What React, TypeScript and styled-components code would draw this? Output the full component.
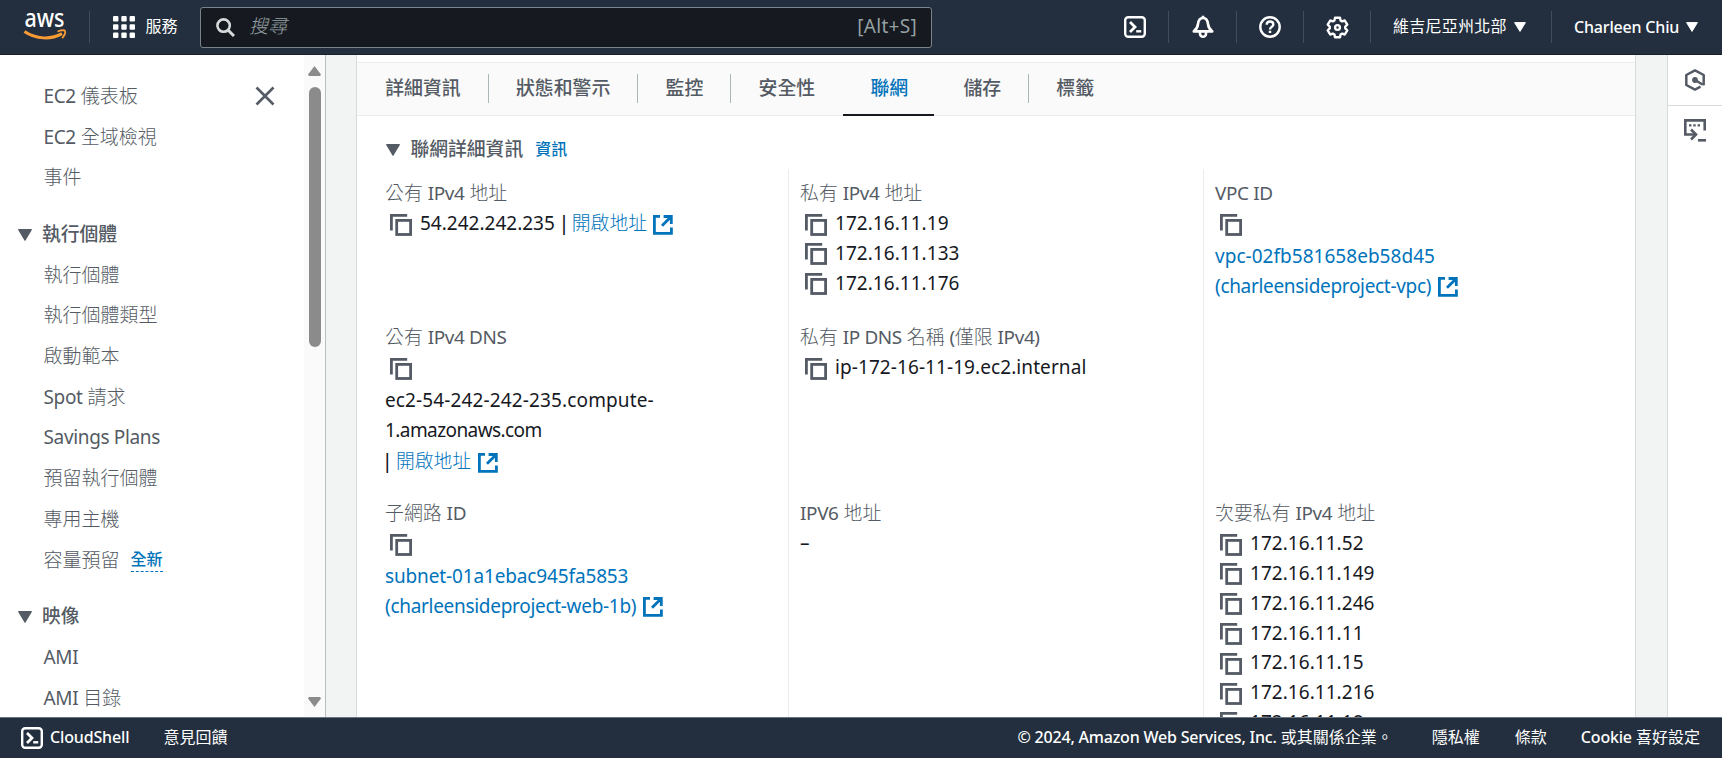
import React from "react";
import styled, { createGlobalStyle } from "styled-components";

const Global = createGlobalStyle`
  *, *::before, *::after { box-sizing: border-box; }
  html, body { margin: 0; height: 100%; overflow: hidden; }
  body {
    font-family: "Noto Sans", "Noto Sans CJK TC", sans-serif;
    font-size: 19px;
    line-height: 29.8px;
    color: #16191f;
    background: #f2f3f3;
  }
`;

const Page = styled.div`
  display: flex;
  flex-direction: column;
  width: 1722px;
  height: 758px;
  overflow: hidden;
`;

/* ---------- top bar ---------- */

const TopBar = styled.header`
  display: flex;
  align-items: center;
  flex: none;
  height: 55px;
  background: #232f3e;
  border-bottom: 1px solid #17202b;
  color: #fff;
  font-size: 16px;
`;

const Logo = styled.svg`
  display: block;
  flex: none;
  width: 44px;
  height: 34px;
  margin: 0 22px 2px 23px;
  overflow: visible;
`;

const BarDivider = styled.span`
  flex: none;
  width: 1px;
  height: 32px;
  background: #414d5c;
`;

const Services = styled.div`
  display: flex;
  align-items: center;
  width: 110px;
  padding-left: 23px;
  gap: 10.5px;
  line-height: 20px;
  white-space: nowrap;
`;

const RaisedLabel = styled.span`
  padding-bottom: 2px;
`;

const SearchBox = styled.div`
  display: flex;
  align-items: center;
  flex: none;
  width: 732px;
  height: 41px;
  padding: 0 14px 0 15px;
  border: 1px solid #7a848c;
  border-radius: 3px;
  background: #16191f;
  color: #95a0a3;
  font-size: 19px;
`;

const Placeholder = styled.span`
  flex: 1;
  margin-left: 14px;
  font-style: italic;
  font-weight: 300;
  color: #95a0a3;
`;

const Shortcut = styled.span`
  letter-spacing: 0.3px;
`;

const BarActions = styled.nav`
  display: flex;
  align-items: center;
  margin-left: auto;
`;

const BarIcon = styled.span<{ $w: number }>`
  display: flex;
  justify-content: center;
  width: ${(p) => p.$w}px;
`;

const BarMenu = styled.span<{ $w: number; $ls?: number }>`
  display: flex;
  align-items: center;
  justify-content: flex-start;
  gap: 7px;
  width: ${(p) => p.$w}px;
  padding-left: 22px;
  letter-spacing: ${(p) => p.$ls ?? 0}px;
  line-height: 20px;
  white-space: nowrap;
`;

const Medium = styled.span<{ $ls?: number }>`
  font-weight: 500;
  letter-spacing: ${(p) => p.$ls ?? -0.1}px;
`;

/* ---------- body ---------- */

const Body = styled.div`
  display: flex;
  flex: 1;
  min-height: 0;
`;

const Sidebar = styled.aside`
  display: flex;
  flex: none;
  width: 326px;
  background: #fff;
  border-right: 1px solid #b9bec1;
`;

const NavList = styled.div`
  flex: 1;
  padding-top: 21.5px;
  color: #545b64;
  overflow: hidden;
`;

const NavItem = styled.div`
  display: flex;
  align-items: center;
  height: 40.7px;
  padding-left: 43.5px;
  font-weight: 300;
  white-space: nowrap;
`;

const Latin = styled.span`
  font-weight: 400;
  letter-spacing: -0.35px;
`;

const CloseButton = styled.span`
  display: flex;
  margin: 0 29px 1px auto;
`;

const NavHeading = styled.div`
  display: flex;
  align-items: center;
  gap: 10.5px;
  height: 40.7px;
  margin-top: 16px;
  padding-left: 17.5px;
  font-size: 18.8px;
  font-weight: 500;
`;

const NewBadge = styled.span`
  margin-left: 11px;
  border-bottom: 1.4px dashed #0073bb;
  color: #0073bb;
  font-size: 16px;
  font-weight: 500;
  line-height: 23px;
`;

const ScrollTrack = styled.div`
  display: flex;
  flex-direction: column;
  align-items: center;
  width: 21px;
  padding: 11px 0 10px;
  background: #fafafa;
`;

const ScrollThumb = styled.div`
  width: 12px;
  height: 260px;
  margin: 11px 0 auto;
  border-radius: 6px;
  background: #8b8b8b;
`;

const Main = styled.main`
  flex: 1;
  display: flex;
  padding: 0 31px 0 30px;
  background: #f2f3f3;
`;

const Panel = styled.section`
  flex: 1;
  min-width: 0;
  display: flex;
  flex-direction: column;
  background: #fff;
  border: 1px solid #d5dbdb;
  border-width: 0 1px;
`;

const Tabs = styled.div`
  display: flex;
  flex: none;
  height: 54px;
  margin-top: 7px;
  background: #fafafa;
  border-top: 1px solid #eaeded;
  border-bottom: 1px solid #eaeded;
  color: #545b64;
`;

const Tab = styled.div<{ $active?: boolean }>`
  position: relative;
  display: flex;
  align-items: center;
  padding: 0 27px 1px 28.2px;
  font-size: 18.9px;
  font-weight: 500;
  color: ${(p) => (p.$active ? "#0073bb" : "inherit")};
  white-space: nowrap;

  & + &::before {
    content: "";
    position: absolute;
    left: 0;
    top: 11px;
    width: 1px;
    height: 29px;
    background: #aab7b8;
  }

  &::after {
    content: "";
    display: ${(p) => (p.$active ? "block" : "none")};
    position: absolute;
    left: 1px;
    right: 1px;
    bottom: -1px;
    height: 2.4px;
    background: #16191f;
  }
`;

const SectionHead = styled.div`
  display: flex;
  align-items: center;
  flex: none;
  height: 53px;
  padding: 15px 0 0 29px;
  color: #545b64;
  font-size: 18.8px;
  font-weight: 500;
`;

const SectionTitle = styled.span`
  margin: 0 12px 0 10.5px;
`;

const InfoLink = styled.span`
  color: #0073bb;
  font-size: 16px;
  font-weight: 500;
`;

const Columns = styled.div`
  display: grid;
  grid-template-columns: 431px 415px 1fr;
  flex: 1;
  min-height: 0;
  overflow: hidden;
`;

const Column = styled.div<{ $first?: boolean }>`
  padding: 10px 0 0 ${(p) => (p.$first ? 28 : 11)}px;
  border-left: ${(p) => (p.$first ? "none" : "1px solid #eaeded")};
`;

const Field = styled.div<{ $h: number }>`
  height: ${(p) => p.$h}px;
`;

const Label = styled.div`
  color: #545b64;
  font-size: 18.9px;
  font-weight: 300;
  height: 30.3px;
  white-space: nowrap;
`;

const Line = styled.div<{ $mt?: number; $link?: boolean; $ls?: number }>`
  display: flex;
  align-items: center;
  height: 29.8px;
  margin-top: ${(p) => p.$mt ?? 0}px;
  color: ${(p) => (p.$link ? "#0073bb" : "inherit")};
  letter-spacing: ${(p) => p.$ls ?? 0}px;
  white-space: nowrap;
`;

const CopyOnly = styled.div`
  height: 32.5px;
  display: flex;
  padding-top: 4px;
`;

const Pipe = styled.span`
  width: 5px;
  margin: 0 5px 0 7px;
  text-indent: -3px;
  font-weight: 500;
`;

const LeadingPipe = styled(Pipe)`
  margin: 0 6px 0 0;
  text-indent: -3px;
`;

const Link = styled.span`
  color: #0073bb;
  font-weight: 300;
  font-size: 18.8px;
`;

const CopySvg = styled.svg`
  flex: none;
  display: block;
  width: 22px;
  height: 22px;
  margin: 1px 8px 0 5px;
`;

const ExternalSvg = styled.svg`
  flex: none;
  display: block;
  width: 20px;
  height: 20px;
  margin: 1px 0 0 6.5px;
`;

const Rail = styled.aside`
  flex: none;
  width: 55px;
  background: #fff;
  border-left: 1px solid #d5dbdb;
`;

const RailItem = styled.div<{ $line?: boolean }>`
  display: flex;
  justify-content: center;
  align-items: center;
  height: ${(p) => (p.$line ? 51 : 48)}px;
  border-bottom: ${(p) => (p.$line ? "1px solid #d5dbdb" : "none")};
`;

/* ---------- footer ---------- */

const Footer = styled.footer`
  display: flex;
  align-items: center;
  flex: none;
  height: 41px;
  padding: 0 22px 1px 21px;
  background: #232f3e;
  border-top: 1px solid #6b7581;
  color: #fff;
  font-size: 16px;
  white-space: nowrap;
`;

const FooterText = styled.span<{ $ml?: number; $push?: boolean }>`
  margin-left: ${(p) => (p.$push ? "auto" : `${p.$ml ?? 0}px`)};
`;

/* ---------- icons ---------- */

const Copy = () => (
  <CopySvg viewBox="0 0 22 22" fill="none" stroke="#545b64" strokeWidth="2.8">
    <path d="M1.4 16.4V1.4H17.2" />
    <rect x="6.7" y="6.4" width="13.9" height="14.1" />
  </CopySvg>
);

const External = () => (
  <ExternalSvg viewBox="0 0 20 20" fill="none" stroke="#0073bb" strokeWidth="2.8">
    <path d="M7 1.4H1.4V18.4H18.4V12.6" />
    <path d="M10.6 1.5h7.7V9M18 1.8L9 10.8" />
  </ExternalSvg>
);

const Caret = ({ w, h, fill }: { w: number; h: number; fill: string }) => (
  <svg width={w} height={h} viewBox="0 0 12 10" preserveAspectRatio="none" fill={fill} stroke={fill} strokeLinejoin="round">
    <path d="M.6 .6h10.8L6 9.4z" />
  </svg>
);

const Shell = () => (
  <svg width="22" height="22" viewBox="0 0 22 22" fill="none" stroke="#fff" strokeWidth="2.4">
    <rect x="1.2" y="1.2" width="19.6" height="19.6" rx="3" />
    <path d="M6 6l5 5-5 5" strokeWidth="2.8" />
    <path d="M12.2 15.3h5" strokeWidth="2.4" />
  </svg>
);

const copyLines = (list: string[]) =>
  list.map((ip) => (
    <Line key={ip} $ls={0.04}>
      <Copy />
      {ip}
    </Line>
  ));

const tabs = ["詳細資訊", "狀態和警示", "監控", "安全性", "聯網", "儲存", "標籤"];

export default function App() {
  return (
    <Page>
      <Global />
      <TopBar>
        <Logo viewBox="0 0 44 34">
          <text x="1.5" y="18" fill="#fff" fontSize="25.5" fontWeight="500" textLength="40" lengthAdjust="spacingAndGlyphs">
            aws
          </text>
          <path d="M1.5 22.5C13 30.5 28 30.8 39 24.6" fill="none" stroke="#f79b34" strokeWidth="3" />
          <path d="M34.5 22.6C38 21.2 41.5 21 42 22c.5 1.2-.6 4.6-2.8 7.2" fill="none" stroke="#f79b34" strokeWidth="1.8" />
        </Logo>
        <BarDivider />
        <Services>
          <svg width="22" height="22" viewBox="0 0 22 22" fill="#fff">
            {[0, 8.3, 16.6].map((y) =>
              [0, 8.3, 16.6].map((x) => <rect key={`${x}-${y}`} x={x} y={y} width="5.4" height="5.4" rx="1" />)
            )}
          </svg>
          <RaisedLabel>服務</RaisedLabel>
        </Services>
        <SearchBox>
          <svg width="19" height="19" viewBox="0 0 19 19" fill="none" stroke="#d5dbdb" strokeWidth="2.6">
            <circle cx="7.6" cy="7.6" r="6.2" />
            <path d="M12 12l6 6" strokeWidth="3" />
          </svg>
          <Placeholder>搜尋</Placeholder>
          <Shortcut>[Alt+S]</Shortcut>
        </SearchBox>
        <BarActions>
          <BarIcon $w={66}><Shell /></BarIcon>
          <BarDivider />
          <BarIcon $w={67}>
            <svg width="22" height="24" viewBox="0 0 22 24" fill="none" stroke="#fff" strokeWidth="2.6" strokeLinejoin="round">
              <path d="M1.8 16.4c2.600-2 3.800-3.900 4.200-7.400C6.400 5.400 8 3 11 3s4.600 2.400 5 6c.4 3.500 1.600 5.400 4.200 7.400z" />
              <path d="M11 .8v2.400M8 17v1.800a3 3 0 0 0 6 0V17" />
            </svg>
          </BarIcon>
          <BarDivider />
          <BarIcon $w={66}>
            <svg width="22" height="22" viewBox="0 0 22 22" fill="none" stroke="#fff" strokeWidth="2.4">
              <circle cx="11" cy="11" r="9.7" />
              <path d="M7.7 8.8c0-2 1.4-3.3 3.3-3.3s3.3 1.2 3.3 2.900c0 2.400-3.300 2.600-3.300 5" />
              <path d="M11 14.7v2.3" strokeWidth="2.5" />
            </svg>
          </BarIcon>
          <BarDivider />
          <BarIcon $w={66}>
            <svg width="23" height="23" viewBox="0 0 24 24" fill="none" stroke="#fff" strokeWidth="2.5" strokeLinejoin="round">
              <path d="M9.400 1.800h5.200l.6 2.800 1.700 1 2.700-.9 2.600 4.400-2.100 1.900v2l2.100 1.900-2.600 4.400-2.700-.9-1.700 1-.6 2.800H9.400l-.6-2.800-1.700-1-2.700.9-2.600-4.400L3.900 13v-2L1.800 9.100l2.600-4.400 2.700.9 1.700-1z" />
              <circle cx="12" cy="12" r="2.500" />
            </svg>
          </BarIcon>
          <BarDivider />
          <BarMenu $w={180} $ls={0.25}>
            <RaisedLabel>維吉尼亞州北部</RaisedLabel> <Caret w={12} h={10} fill="#fff" />
          </BarMenu>
          <BarDivider />
          <BarMenu $w={170}>
            <Medium $ls={-0.18}>Charleen Chiu</Medium> <Caret w={12} h={10} fill="#fff" />
          </BarMenu>
        </BarActions>
      </TopBar>

      <Body>
        <Sidebar>
          <NavList>
            <NavItem>
              <span><Latin>EC2</Latin> 儀表板</span>
              <CloseButton>
                <svg width="20" height="20" viewBox="0 0 20 20" stroke="#545b64" strokeWidth="2.6">
                  <path d="M1.5 1.5l17 17M18.5 1.5l-17 17" />
                </svg>
              </CloseButton>
            </NavItem>
            <NavItem><span><Latin>EC2</Latin> 全域檢視</span></NavItem>
            <NavItem>事件</NavItem>
            <NavHeading><Caret w={14} h={12} fill="#545b64" />執行個體</NavHeading>
            <NavItem>執行個體</NavItem>
            <NavItem>執行個體類型</NavItem>
            <NavItem>啟動範本</NavItem>
            <NavItem><span><Latin>Spot</Latin> 請求</span></NavItem>
            <NavItem><Latin>Savings Plans</Latin></NavItem>
            <NavItem>預留執行個體</NavItem>
            <NavItem>專用主機</NavItem>
            <NavItem>容量預留<NewBadge>全新</NewBadge></NavItem>
            <NavHeading><Caret w={14} h={12} fill="#545b64" />映像</NavHeading>
            <NavItem><Latin>AMI</Latin></NavItem>
            <NavItem><span><Latin>AMI</Latin> 目錄</span></NavItem>
          </NavList>
          <ScrollTrack>
            <svg width="13" height="10" viewBox="0 0 13 10" fill="#8b8b8b"><path d="M6.5 0L13 8.5 12 10H1L0 8.500z" /></svg>
            <ScrollThumb />
            <svg width="13" height="10" viewBox="0 0 13 10" fill="#8b8b8b"><path d="M6.5 10L13 1.5 12 0H1L0 1.500z" /></svg>
          </ScrollTrack>
        </Sidebar>

        <Main>
          <Panel>
            <Tabs>
              {tabs.map((t) => (
                <Tab key={t} $active={t === "聯網"}>{t}</Tab>
              ))}
            </Tabs>
            <SectionHead>
              <Caret w={14} h={12} fill="#545b64" />
              <SectionTitle>聯網詳細資訊</SectionTitle>
              <InfoLink>資訊</InfoLink>
            </SectionHead>
            <Columns>
              <Column $first>
                <Field $h={144}>
                  <Label>公有 <Latin>IPv4</Latin> 地址</Label>
                  <Line><Copy /><span>54.242.242.235</span><Pipe>|</Pipe><Link>開啟地址</Link><External /></Line>
                </Field>
                <Field $h={176}>
                  <Label>公有 <Latin>IPv4 DNS</Latin></Label>
                  <CopyOnly><Copy /></CopyOnly>
                  <Line $ls={0.13}>ec2-54-242-242-235.compute-</Line>
                  <Line $ls={-0.58}>1.amazonaws.com</Line>
                  <Line $mt={2}><LeadingPipe>|</LeadingPipe><Link>開啟地址</Link><External /></Line>
                </Field>
                <Field $h={200}>
                  <Label>子網路 <Latin>ID</Latin></Label>
                  <CopyOnly><Copy /></CopyOnly>
                  <Line $link $ls={-0.14}>subnet-01a1ebac945fa5853</Line>
                  <Line $link $ls={-0.3}>(charleensideproject-web-1b)<External /></Line>
                </Field>
              </Column>
              <Column>
                <Field $h={144}>
                  <Label>私有 <Latin>IPv4</Latin> 地址</Label>
                  {copyLines(["172.16.11.19", "172.16.11.133", "172.16.11.176"])}
                </Field>
                <Field $h={176}>
                  <Label>私有 <Latin>IP DNS</Latin> 名稱 <Latin>(</Latin>僅限 <Latin>IPv4)</Latin></Label>
                  <Line $ls={0.08}><Copy />ip-172-16-11-19.ec2.internal</Line>
                </Field>
                <Field $h={200}>
                  <Label><Latin>IPV6</Latin> 地址</Label>
                  <Line>–</Line>
                </Field>
              </Column>
              <Column>
                <Field $h={320}>
                  <Label><Latin>VPC ID</Latin></Label>
                  <CopyOnly><Copy /></CopyOnly>
                  <Line $link $ls={0.03}>vpc-02fb581658eb58d45</Line>
                  <Line $link $ls={-0.32}>(charleensideproject-vpc)<External /></Line>
                </Field>
                <Field $h={300}>
                  <Label>次要私有 <Latin>IPv4</Latin> 地址</Label>
                  {copyLines([
                    "172.16.11.52",
                    "172.16.11.149",
                    "172.16.11.246",
                    "172.16.11.11",
                    "172.16.11.15",
                    "172.16.11.216",
                    "172.16.11.18",
                  ])}
                </Field>
              </Column>
            </Columns>
          </Panel>
        </Main>

        <Rail>
          <RailItem $line>
            <svg width="20" height="22" viewBox="0 0 20 22" fill="none" stroke="#545b64" strokeWidth="2.5" strokeLinejoin="round">
              <path d="M17.4 14.8L18.7 15.3V6L10 1.4 1.3 6v10L10 20.6l5.500-2.900" />
              <path d="M10 11l7.500 4.500" />
              <circle cx="10" cy="11" r="2.200" fill="#545b64" stroke="#545b64" strokeWidth="1.4" />
            </svg>
          </RailItem>
          <RailItem>
            <svg width="22" height="23" viewBox="0 0 22 23" fill="none" stroke="#545b64" strokeWidth="2.6">
              <path d="M20.7 11.5V1.4H1.3V15.5H11" />
              <path d="M7 10.5l5 5-5 5" />
              <path d="M5 6.3h2.4M9.3 6.3h2.4M13.6 6.3H16" strokeWidth="2.2" />
              <path d="M14 21.3h8" strokeWidth="2.6" />
            </svg>
          </RailItem>
        </Rail>
      </Body>

      <Footer>
        <Shell />
        <FooterText $ml={7}><Medium $ls={-0.15}>CloudShell</Medium></FooterText>
        <FooterText $ml={34}>意見回饋</FooterText>
        <FooterText $push><Medium $ls={-0.2}>© 2024, Amazon Web Services, Inc.</Medium> 或其關係企業。</FooterText>
        <FooterText $ml={39}>隱私權</FooterText>
        <FooterText $ml={35}>條款</FooterText>
        <FooterText $ml={34}><Medium $ls={-0.2}>Cookie</Medium> 喜好設定</FooterText>
      </Footer>
    </Page>
  );
}
